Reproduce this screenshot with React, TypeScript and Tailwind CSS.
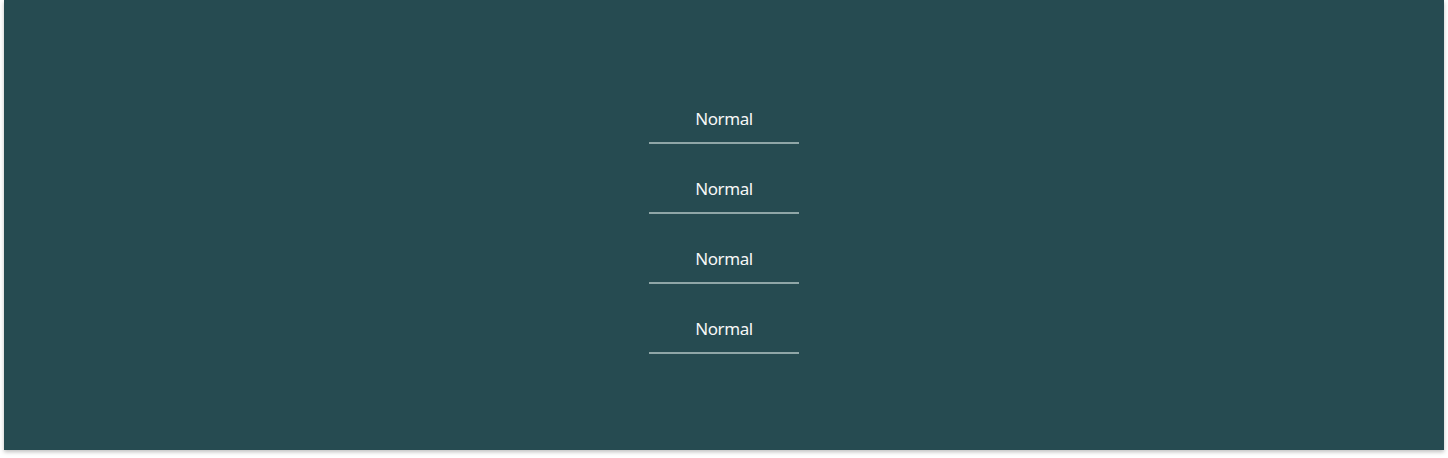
import { type FC } from 'react';

const items = ['Normal', 'Normal', 'Normal', 'Normal'];

const App: FC = () => {
    return (
        <div className="w-[1448px] h-[458px] bg-white">
            {/* Main panel with a soft shadow under it */}
            <div className="ml-[4px] w-[1440px] h-[450px] bg-[#264b51] shadow-[0_2px_4px_rgba(0,0,0,0.25)] flex flex-col items-center pt-[107px] gap-[33px]">
                {items.map((label, i) => (
                    <div key={i} className="w-[150px] flex flex-col items-center">
                        <span className="h-[24px] leading-[24px] text-[17px] tracking-[-0.4px] text-[#f7f7f7] font-['Noto_Sans',sans-serif]">{label}</span>
                        <div className="mt-[11px] w-full h-[2px] bg-[#8fa6a7]" />
                    </div>
                ))}
            </div>
        </div>
    );
};

export default App;
